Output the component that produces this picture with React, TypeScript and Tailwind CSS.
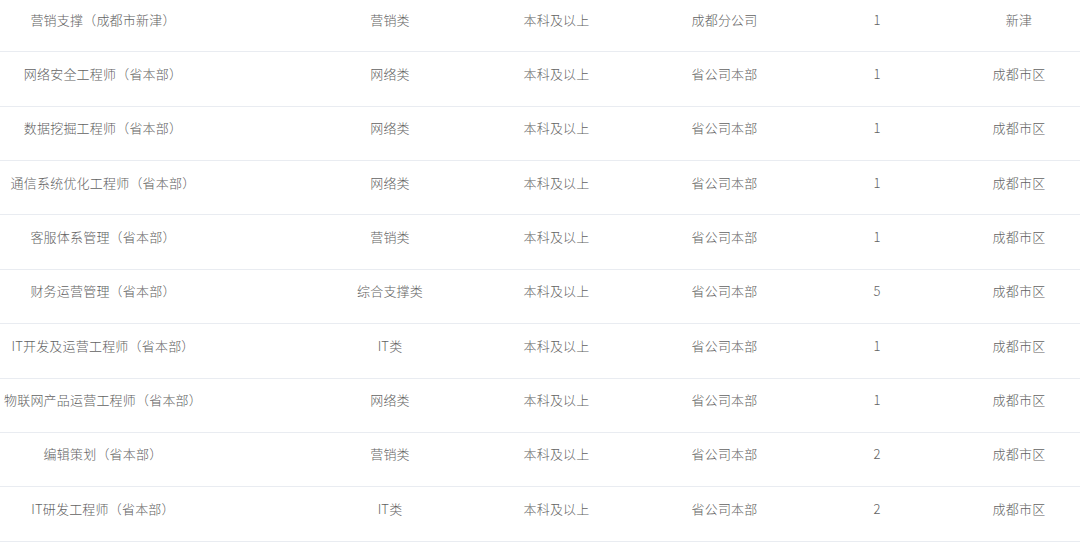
import React from "react";

const rows: [string, string, string, string, string, string][] = [
  ["营销支撑（成都市新津）", "营销类", "本科及以上", "成都分公司", "1", "新津"],
  ["网络安全工程师（省本部）", "网络类", "本科及以上", "省公司本部", "1", "成都市区"],
  ["数据挖掘工程师（省本部）", "网络类", "本科及以上", "省公司本部", "1", "成都市区"],
  ["通信系统优化工程师（省本部）", "网络类", "本科及以上", "省公司本部", "1", "成都市区"],
  ["客服体系管理（省本部）", "营销类", "本科及以上", "省公司本部", "1", "成都市区"],
  ["财务运营管理（省本部）", "综合支撑类", "本科及以上", "省公司本部", "5", "成都市区"],
  ["IT开发及运营工程师（省本部）", "IT类", "本科及以上", "省公司本部", "1", "成都市区"],
  ["物联网产品运营工程师（省本部）", "网络类", "本科及以上", "省公司本部", "1", "成都市区"],
  ["编辑策划（省本部）", "营销类", "本科及以上", "省公司本部", "2", "成都市区"],
  ["IT研发工程师（省本部）", "IT类", "本科及以上", "省公司本部", "2", "成都市区"],
];

export default function App() {
  return (
    <div
      className="w-[1080px] h-[542px] overflow-hidden bg-white text-[#626262] text-[13px] font-light"
      style={{ fontFamily: '"Microsoft YaHei", "Noto Sans CJK SC", "Liberation Sans", sans-serif' }}
    >
      <div className="-mt-[2px]">
        {rows.map((r, i) => (
          <div
            key={i}
            className="flex h-[54.36px] border-b border-[#e9ecf1] pt-[11.5px] leading-[19px] whitespace-nowrap tracking-[0.2px]"
          >
            <div className="w-[206px] shrink-0 text-center">{r[0]}</div>
            <div className="w-[128px] shrink-0 ml-[120px] text-center">{r[1]}</div>
            <div className="w-[128px] shrink-0 ml-[38.5px] text-center">{r[2]}</div>
            <div className="w-[128px] shrink-0 ml-[40px] text-center">{r[3]}</div>
            <div className="w-[128px] shrink-0 ml-[24.5px] text-center">{r[4]}</div>
            <div className="w-[122px] shrink-0 ml-[17px] text-center">{r[5]}</div>
          </div>
        ))}
      </div>
    </div>
  );
}
